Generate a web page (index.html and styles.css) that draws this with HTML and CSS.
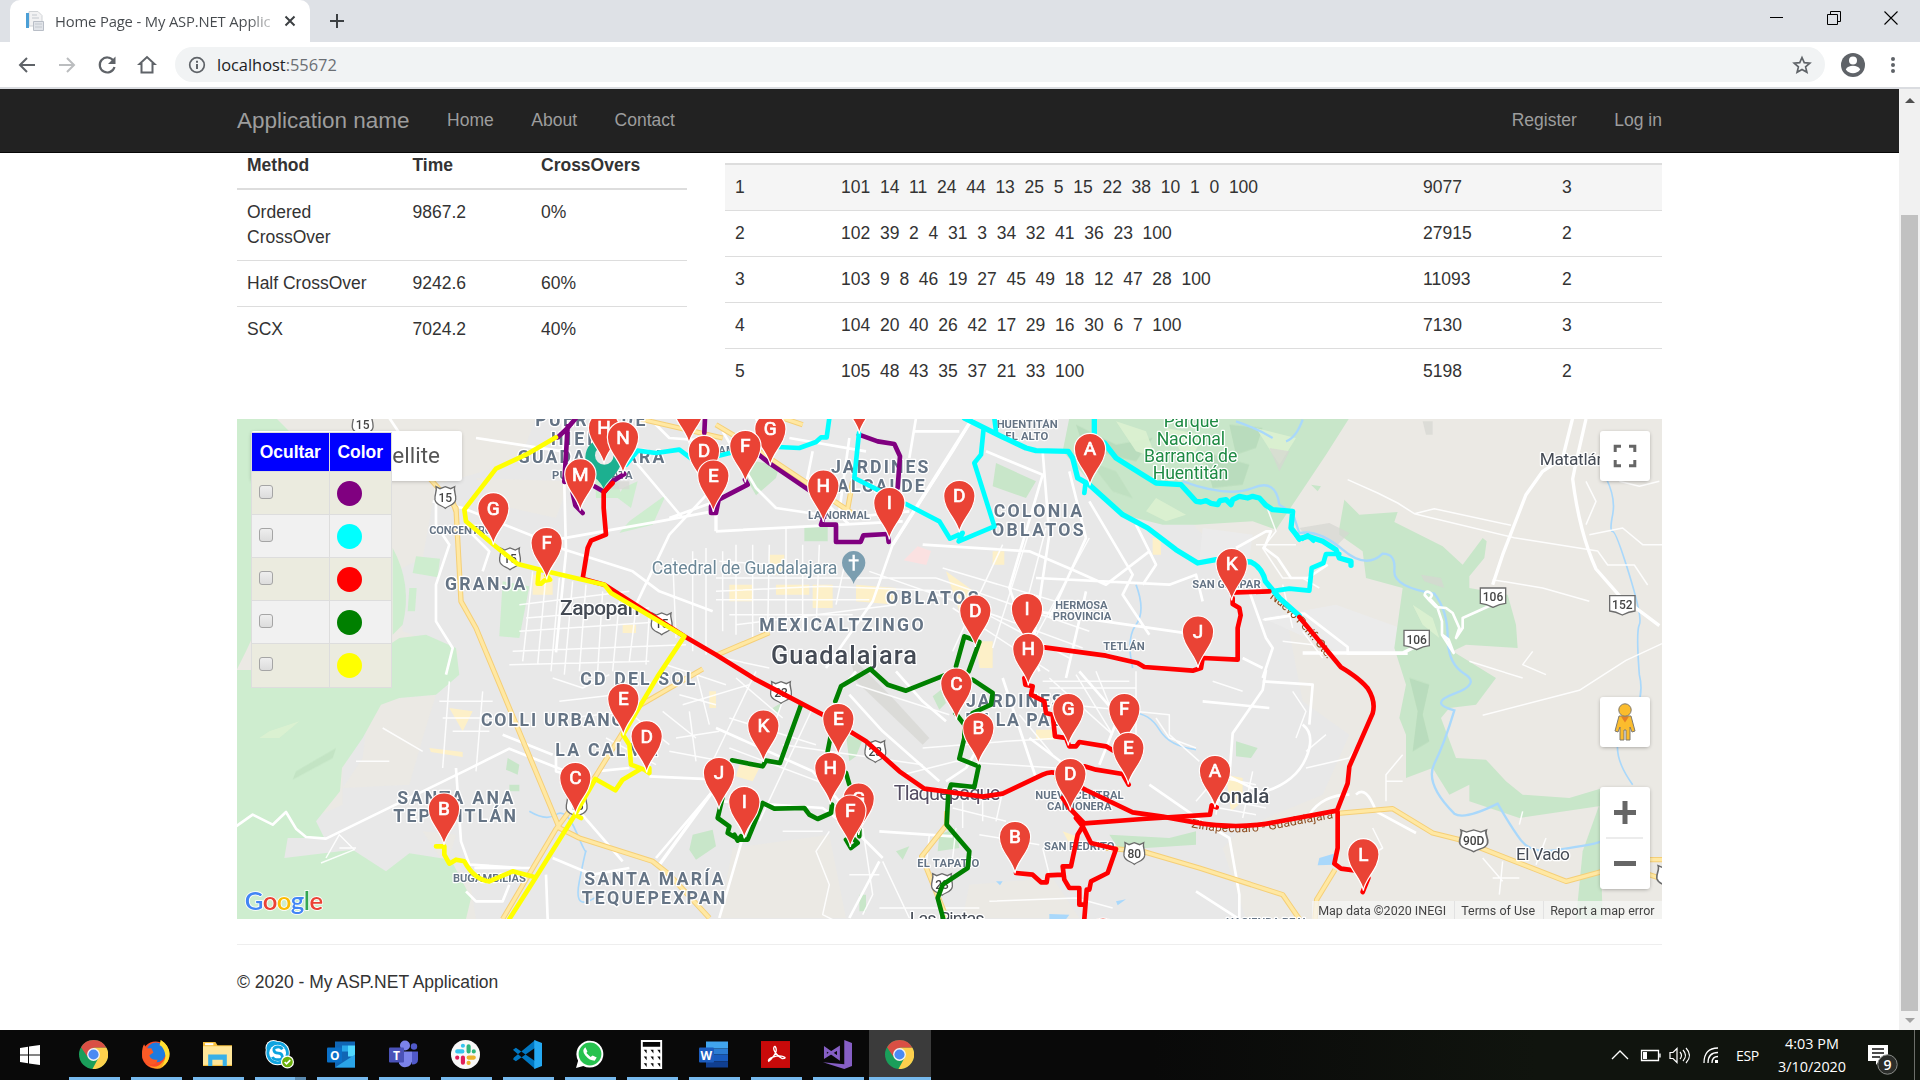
FILE: index.html
```html
<!DOCTYPE html>
<html lang="en">
<head>
<meta charset="utf-8">
<title>Home Page - My ASP.NET Application</title>
<link rel="stylesheet" href="styles.css">
</head>
<body>
<header class="browser">
  <div class="tabstrip">
    <div class="tab">
      <svg class="favicon" width="20" height="20" viewBox="0 0 20 20"><path d="M4 .5h9l4 4V15H4z" fill="#f2f2f3" stroke="#d0d3d6"/><path d="M1 2h3v15H1z" fill="#4b9fd6"/><path d="M8.500 10.500h10v9h-10z" fill="#e1e4e9" stroke="#b9bec7"/><path d="M7 4h5M7 7h7M10 13h7M10 16h7" stroke="#c3c8ce"/></svg>
      <span class="tab-title">Home Page - My ASP.NET Applic</span>
      <svg width="12" height="12" viewBox="0 0 12 12"><path d="M1.500 1.500l9 9m0-9l-9 9" stroke="#3c4043" stroke-width="2"/></svg>
    </div>
    <svg class="newtab" width="16" height="16" viewBox="0 0 16 16"><path d="M8 1v14M1 8h14" stroke="#3c4043" stroke-width="2"/></svg>
    <div class="winbtns">
      <svg width="14" height="14" viewBox="0 0 14 14"><path d="M0 6.500h13" stroke="#000"/></svg>
      <svg width="14" height="14" viewBox="0 0 14 14"><path d="M.5 3.500h10v10H.5zM3.500 3V.5h10v10H11" fill="none" stroke="#000"/></svg>
      <svg width="14" height="14" viewBox="0 0 14 14"><path d="M.5 .5l13 13m0-13l-13 13" stroke="#000" stroke-width="1.100"/></svg>
    </div>
  </div>
  <div class="toolbar">
    <svg class="tool" viewBox="0 0 20 20"><path d="M18 10H3M10 3l-7 7 7 7" fill="none" stroke="#5f6368" stroke-width="2"/></svg>
    <svg class="tool" viewBox="0 0 20 20"><path d="M2 10h15M10 3l7 7-7 7" fill="none" stroke="#bbbdbf" stroke-width="2"/></svg>
    <svg class="tool" viewBox="0 0 20 20"><path d="M16.300 5.500A7.500 7.500 0 1 0 17.500 12" fill="none" stroke="#5f6368" stroke-width="2.200"/><path d="M18.500 1.500V9H11z" fill="#5f6368"/></svg>
    <svg class="tool" viewBox="0 0 20 20"><path d="M4.500 17.500V9H2.500L10 2l7.500 7h-2v8.500z" fill="none" stroke="#5f6368" stroke-width="2"/></svg>
    <div class="omnibox">
      <svg width="18" height="18" viewBox="0 0 18 18"><circle cx="9" cy="9" r="7.300" fill="none" stroke="#5f6368" stroke-width="1.700"/><path d="M9 8v5M9 4.800v1.900" stroke="#5f6368" stroke-width="2"/></svg>
      <span class="url">localhost<span class="port">:55672</span></span>
      <svg class="star" width="20" height="20" viewBox="0 0 24 24"><path d="M12 3l2.700 6.200 6.700.6-5.100 4.400 1.600 6.600L12 17.300l-5.900 3.500 1.600-6.600-5.100-4.400 6.700-.6z" fill="none" stroke="#5f6368" stroke-width="2"/></svg>
    </div>
    <svg width="24" height="24" viewBox="0 0 24 24"><circle cx="12" cy="12" r="12" fill="#5f6368"/><circle cx="12" cy="7.500" r="4" fill="#fff"/><path d="M4.800 16.500c2-5 12.400-5 14.400 0-3.400 5-11 5-14.400 0z" fill="#fff"/></svg>
    <svg class="dots" width="6" height="18" viewBox="0 0 6 18"><g fill="#5f6368"><circle cx="3" cy="3" r="2"/><circle cx="3" cy="9" r="2"/><circle cx="3" cy="15" r="2"/></g></svg>
  </div>
</header>
<div class="viewport">
  <div class="page">
    <nav class="navbar"><div class="container">
      <a class="brand">Application name</a><a>Home</a><a>About</a><a>Contact</a>
      <a class="push">Register</a><a class="last">Log in</a>
    </div></nav>
    <main class="container col">
      <div class="tables">
        <table class="tbl methods">
          <colgroup><col class="m1"><col class="m2"><col></colgroup>
          <thead><tr><th>Method</th><th>Time</th><th>CrossOvers</th></tr></thead>
          <tbody>
            <tr><td>Ordered CrossOver</td><td>9867.2</td><td>0%</td></tr>
            <tr><td>Half CrossOver</td><td>9242.6</td><td>60%</td></tr>
            <tr><td>SCX</td><td>7024.2</td><td>40%</td></tr>
          </tbody>
        </table>
        <table class="tbl routes">
          <colgroup><col class="r1"><col class="r2"><col class="r3"><col></colgroup>
          <tbody>
            <tr class="hover"><td>1</td><td>101  14  11  24  44  13  25  5  15  22  38  10  1  0  100</td><td>9077</td><td>3</td></tr>
            <tr><td>2</td><td>102  39  2  4  31  3  34  32  41  36  23  100</td><td>27915</td><td>2</td></tr>
            <tr><td>3</td><td>103  9  8  46  19  27  45  49  18  12  47  28  100</td><td>11093</td><td>2</td></tr>
            <tr><td>4</td><td>104  20  40  26  42  17  29  16  30  6  7  100</td><td>7130</td><td>3</td></tr>
            <tr><td>5</td><td>105  48  43  35  37  21  33  100</td><td>5198</td><td>2</td></tr>
          </tbody>
        </table>
      </div>
      <div class="map">
        <svg class="canvas" viewBox="3 3 4275 1500">
          <defs>
            <path id="pin" d="M0 109C-5 72-47 43-47 0a47 47 0 1 1 94 0C47 43 5 72 0 109z"/>
            <path id="us" d="M-28-33L-16-27 0-33 16-27 28-33C24-18 33-12 31 6 28 24 10 22 0 32-10 22-28 24-31 6-33-12-24-18-28-33z"/>
            <path id="st" d="M-38-28H38V18Q20 20 0 30-20 20-38 18z"/>
            <path id="perif" d="M3100 540Q3185 600 3290 745"/>
            <path id="zina" d="M2865 1228Q3000 1255 3120 1232T3302 1199"/>
          </defs>
          <rect x="0" y="0" width="4280" height="1510" fill="#e8e8e8"/>
          <!-- open countryside -->
          <g fill="#ebe9e4">
            <path d="M0 0H900L850 130 600 200 560 420 480 460 500 640 670 700 640 760 430 860 320 1050 320 1160 0 1300z"/>
            <path d="M720 180L1000 190 960 300 780 260z"/>
            <path d="M3060 0H4280V1503H3030L2960 1290 3020 1230 3260 1130 3340 950 3200 850 3150 590 2880 330 2800 200z"/>
            <path d="M400 850L600 830 560 960 520 1100 320 1110 380 1020z"/>
            <path d="M560 1240L660 1250 640 1320 700 1380 720 1503H690L620 1330z"/>
            <path d="M1490 1290L1780 1250 1830 1500H1450zM2200 1400L2450 1380 2530 1500H2180z"/>
          </g>
          <g fill="#ebebeb"><path d="M2900 330L3050 350 3040 420 2890 430zM3080 600L3300 560 3520 640 3520 700 3300 700z"/></g>
          <!-- parks -->
          <g fill="#ceedcf">
            <path d="M0 0H120L200 80 160 420 30 700 0 760z"/>
            <path d="M0 756H260L250 640 430 700 490 660 570 650 660 690 670 770 600 830 490 840 435 860 380 960 318 1050 312 1120 240 1210 265 1260 155 1260 145 1320 350 1295 450 1360 520 1306 645 1325 705 1440 690 1503H0z"/>
            <path d="M470 390Q530 500 500 620L470 650zM540 415L612 422 605 478 530 465zM520 510h22l-5 70h-22z"/>
            <path d="M800 490L880 505 850 660 790 655z"/>
            <path d="M1075 120L1120 125 1160 240 1080 240zM1160 210l45-20-20 80-40-30zM1180 310l110-80-40 90-100 25z"/>
          </g>
          <g fill="#c8e6c9">
            <path d="M2500 0H3340L3270 110 3120 335 3050 310 2880 320 2780 320 2660 290 2570 200 2480 100z"/>
            <path d="M3310 330L3325 245 3370 290 3485 282 3475 312 3620 385 3680 440 3740 360 3752 370 3745 420 3700 475 3700 510 3815 530 3840 620 3845 690 3690 680 3650 700 3780 780 3720 860 3640 870 3615 900 3660 1020 3750 1025 3810 1090 3860 1130 4000 1140 4100 1110 4230 1130 4190 1150 3850 1200 3700 1150 3700 1100 3640 1130 3590 1050 3510 1080 3510 950 3490 900 3510 800 3475 690 3500 510 3390 480 3380 400 3310 350z"/>
            <path d="M4040 1300L4090 1160 4100 1503H4020z"/>
            <path d="M1560 130L1630 145 1620 180 1560 232 1530 180zM2280 135L2400 190 2370 240 2270 205zM1705 325h70v45h-70z"/>
            <path d="M1830 950l50 15-20 50-20 15zM2110 1250l50-20 10 60-65 10zM2090 835l25-20 15 40-20 20zM3000 970l65 20-20 30-45-5zM2620 1250l180 10 80-20v40l-230 15zM1370 1250l60-15 10 50-60 40-20-30z"/>
            <path d="M815 1020l35 20-5 30-35-15zM820 1100h30v20h-30zM1980 1300l40-15-20 40zM1870 1430h20v50h-20zM3225 200l30 5-10 15zM1610 870l25-15-10 35z"/>
          </g>
          <g fill="#b5d9b8" opacity=".75">
            <path d="M2520 20L2640 80 2750 60 2700 130 2620 110 2540 80zM2900 100L3040 140 3020 200 2930 210zM2980 20l100 10-20 60-60 20zM3520 780l60 20-20 90 20 80-50 30 15-120z"/>
            <path d="M180 1060L300 990 290 1020 170 1085zM60 790l20-10-5 30zM2560 130l80 30 50 80-60-20z" opacity=".6"/>
          </g>
          <g fill="#dcf1d0" opacity=".9"><path d="M2640 10l90 30 30 80-60-20zM2790 30l110 20-40 90zM2760 240l90 50-60 20-60-30zM3060 30l120 30-50 80zM3530 560l60 40 20 60-50-40zM100 940l90-30-60 50-60 0z"/></g>
          <g fill="#d6d6d2" opacity=".7"><path d="M3190 330l90-15 60 30-40 40-80-20zM3555 470l60 10 10 30-60-20zM3100 90l60 10-30 60zM3560 10h30v40h-20zM1120 190h60v24h-60zM1840 710l130 130 110 120-20 20-200-190z"/></g>
          <g fill="#fdf0c8">
            <path d="M890 470h60v60h-60zM1600 410h45v60h-45zM1480 500h70v50h-70zM1620 500h100v30h-100zM1730 500h60v70h-60zM1860 500l120 10v50l-120-10zM2130 460l70 50 40 30-10 60-60-20zM2270 400h35v40h-35zM2220 670h50v80h-40zM2750 360h25v50h-25zM2400 935h60v30h-60z"/>
            <path d="M1510 1040l60 10-20 40-50-15zM2480 1240l40 15-15 30zM2970 1070l50 10v70l-35 30zM1420 820h20v50h-20zM640 870l70 10-30 60zM580 990l100 12v15l-95-15zM1160 620h40v25h-40z"/>
          </g>
          <path d="M2045 385l40 14-14 42-68-14z" fill="#fbe1e1"/>
          <g class="water"><path d="M3000 10q60 20 110 50M3150 70q30-10 50-65M2840 190q140 50 210 20t80 50l40 25 20 60q60-10 130 50t120 12q40 0 35 50t120 70q40 50 40 130t50 110-30 60 0 50q-30 100-60 160t60 150q30 20 130-30 40 70 70 110t100 30 120-20 90-60"/>
            <path d="M4110 180q30 60 20 110t0 50 50 130 30 150 0 150q20 80-40 150t20 180M2700 500q30 80 0 120t-10 130M2690 885q50 0 80 50t110 60M880 1180q50 30 80 10t60 50 30 60-20 90 60 40" stroke-width="5"/></g>
          <path d="M3250 1320l50-15-5 35-50 2zM2280 1390h20l-8 12zM2440 1488l60 2-10 14h-50zM2640 1450l30-6-25 18z" fill="#a9d8fb"/>
          <!-- local streets -->
          <g class="street thin">
            <path d="M1440 480H2100M1440 520L1760 505 2150 520M1440 545L1900 545M1480 590H1850M1500 620L1980 560M1450 430L1620 440M1460 400V640M1500 380V650M1550 380V660M1600 380L1595 640M1650 330V600M1700 380V640M1750 380L1740 640M1830 420L1800 560M1900 460L2300 600M2120 450L2560 580M2100 480L2560 640M2080 520L2540 690M2160 540L2500 720M2150 570L2440 760M2300 380L2150 700M2380 340L2270 690M2430 330L2370 560M2560 360L2380 690"/>
            <path d="M1860 800l280 90M1640 980l420 60M1480 900l260 80M1480 990l320 120M1500 780l140 120M1560 760l-140 290M1650 820l-60 170M1730 870l-160 340M2060 990l250-20 170-10M2000 1070l160-40 300 20M2150 1170l160 40M2180 1150v80M2240 1140v70M2300 1120l-20 90M2350 890l100 120M2440 780l190 170M2520 770l110 180M2580 760l80 200M2420 790h260M2440 810h260M2700 760v200M2760 900l40 60 80 30M2500 860l300 30v60l90 80"/>
            <path d="M850 560L1180 520M870 600L1240 570M850 640L1300 610M830 700L1350 680M820 740L1240 730M890 460L860 730M930 470L905 740M970 480L945 760M1010 490L985 770M1050 500L1030 760M1100 520L1085 760M1150 550L1130 760M1200 570L1180 730M1240 590L1230 740M1310 420l10 240M1370 400v300M1410 390v320"/>
            <path d="M640 790L620 1050M610 850h160M620 900h140M650 940h110M740 820l-20 240M1340 860l200-60M1320 960l130-20M1300 1000l160 30M1360 880l20 150M1280 880l100 80M1380 760l40 160M1200 900l100 80M1110 960l150 80M950 780l90 30 80-40M970 850l170-20M1000 900l180-20M1330 830l110 30M1600 750l-140-30M1290 740l180 60"/>
            <path d="M1780 1240l-40 60 40 100-20 90 60 30M1880 1230l30 200-30 60M1840 1370h90M1640 1240h120M1940 1330l80 170M1930 1470h300M2080 1250l-10 100M2160 1230l-10 90M2420 1290l20 80M2230 1250l180 30M2260 1450l260-10 110 30M270 1320l40-70 45 45-100 40M310 1290h50M440 930l120 70M360 1030h100"/>
            <path d="M3090 260l30 80-40 50 60 90h60l50 30M3060 380l120 0M3140 500l30 130M3080 605l120-20M3200 640l60 80M3140 670l90 10M2930 790l90 30M3170 820l40 60-30 80M3210 1000l60-50M3210 1050l130-30 20-30M3500 1010l-50 60v80M3450 1090h50M3410 1230l30 60-80 50M3740 1320l60 70M3800 1330l-10 100M3770 1380h80M3930 1260l-30 80M2940 1080l-60 70M2910 1070l150 30M2940 1140l150 30M2950 1170l110 20M2960 1060l-20 130M3050 1060l-30 140"/>
            <path d="M3335 185l90 40 60 30 50 32 300 72 250 40 30 42h80l40 60M3535 287l60-15 230 50M4060 350l100-20 60 50h60M3770 485l150 25 140 40M3890 700l-30 40 70 30M3740 892l290-75 140-90 108-50M3700 730l160 50M3860 1180l-10 40M4050 190l30 60-30 70M4150 190l60 15 60-15"/>
          </g>
          <g class="street">
            <path d="M0 1225l50-35 60 30 40-38 30 50 30 25 60 5 430-210 120-60 200 80M460 0l40 60 90 30M590 250l90 20 250 100 340-60 160-30M600 210v110l40 60-40 120v110l50 80-20 80M720 60l260 40M980 3l10 400-30 300M1180 110l160 190M1300 300l140-50M1440 200l-140 150-100 210M940 380l250 80 80 60 160 60M700 340l60 60-20 60"/>
            <path d="M1240 0l60 60 140 10M1460 40l100 170 60 60 200 30 200-20M1560 0l60 150 70 30M1730 100l-20 100 130 120M1660 60l230 40M1440 340l560-30M1840 60l-30 220M2210 0l-60 100-180 280-60 170-140 200M2040 0l-20 120M2030 40h140M2250 100l170 70-100 340 90 250M2060 380l320 20 140 60 90 40 130-100M2420 100l20 250-60 400M2500 160l50 200-110 240M2560 250l130 220-30 60 80 120M2700 320l60 120-40 60M2400 480l400 20 80-30 20 80M2400 580l480 70M2550 520l-60 260"/>
            <path d="M1860 760l-50 60M1980 760l80 90 70 60M1840 830l100 110 170 150M1440 930l290 130 80 90M1460 1150l300 20 120 90 60 60M1520 1260l-70 240M1930 1240l220 15M1930 1330l-90 170M2250 950l-60 100-60 40M2300 780l100 300M2380 960l120 90M2530 760l130 150 20 160M2650 890l-60 150M2740 1100l130 90M2900 850l200 20M3090 756l-10 60-90 130-10 130 120 60M3020 720l60 30"/>
            <path d="M3000 390l90-50h15l-20 50 40 30 40 60 50 0 60-40M3040 520l50 140 20 30-30 90M3085 605l120-18 130 100 0 20 180 0M2880 1200l100 60 30 170v73M2880 1420l140 90M3220 1190q40-60 120-60M3360 1130q30-30 60 50l120 65M3080 790l150 10-10 120M3200 920q40 30 10 100t-120 100"/>
            <path d="M660 1050l15 220 25 70 160 10M715 1350h180M690 1420l30 30h80l20-50M930 1370l5 133M950 1320l120 50 110-20M1030 1180l130 150M1260 1320l170-200M1080 1060l100-10M1240 1075l210 10M960 1010v50l120 30M800 950l150 60"/>
          </g>
          <g class="street wide"><path d="M3770 500l30-90 70-180 50-70 60-40 30-120M4050 3l-30 130-10 50q20 160 70 270l70 80 120 90M3200 705l300 0 60-30M1430 1120l-160 220M2210 0l-240 380M1440 240v100"/></g>
          <path class="street" d="M3765 562l-85 38 0 30-20 30 10-30-20-45-20-15-30-3-18-18-16-18q2-15 15-8t0 18l22 24 15 45 0 40 35 55-15-40-20-15"/>
          <!-- highways -->
          <path class="hw-edge" d="M580 180l80 90 15 280 45 80 250 600 60 30 220 70 50 40 120 130M800 1503l160-270 120-160 130-210 190-110M1440 712l160-68M1200 0l260 60M1440 20l100 60 330 220M3305 1186l165-14 120 73 80 20 320 125 110-30 70-35h108M4150 1340l120 40M2610 1290l110 10 170 50 250 80 50 73M3297 1355l-55 90-5 60M2132 1180v40l-75 95 75 185M2460 1075l60 100M1830 300l20-110M1640 0l60 20M660 280l-20-60"/>
          <path class="hw" d="M580 180l80 90 15 280 45 80 250 600 60 30 220 70 50 40 120 130M800 1503l160-270 120-160 130-210 190-110M1440 712l160-68M1200 0l260 60M1440 20l100 60 330 220M3305 1186l165-14 120 73 80 20 320 125 110-30 70-35h108M4150 1340l120 40M2610 1290l110 10 170 50 250 80 50 73M3297 1355l-55 90-5 60M2132 1180v40l-75 95 75 185M2460 1075l60 100M1830 300l20-110M1640 0l60 20M660 280l-20-60"/>
          <g class="shield">
            <g transform="translate(380 22)"><use href="#us"/><text>15</text></g><g transform="translate(628 239)"><use href="#us"/><text>15</text></g><g transform="translate(822 423)"><use href="#us"/><text>15</text></g><g transform="translate(1277 618)"><use href="#us"/><text>15</text></g><g transform="translate(1022 1165)"><use href="#us"/><text>15</text></g>
            <g transform="translate(1635 824)"><use href="#us"/><text>23</text></g><g transform="translate(1918 1001)"><use href="#us"/><text>23</text></g><g transform="translate(2118 1400)"><use href="#us"/><text>23</text></g><g transform="translate(2695 1307)"><use href="#us"/><text>80</text></g>
            <g transform="translate(3713 1269)"><use href="#us" transform="scale(1.350 1)"/><text>90D</text></g><g transform="translate(4300 1376)"><use href="#us" transform="scale(1.200 1)"/></g>
            <g transform="translate(3771 538)"><use href="#st"/><text>106</text></g><g transform="translate(3542 665)"><use href="#st"/><text>106</text></g><g transform="translate(4159 561)"><use href="#st"/><text>152</text></g>
          </g>
          <!-- place names -->
          <g class="lbl big">
            <text x="898" y="25" textLength="330">PUERTA DE</text><text x="945" y="80" textLength="230">HIERRO</text><text x="845" y="136" textLength="440">GUADALAJARA</text>
            <text x="627" y="515" textLength="241">GRANJA</text><text x="1033" y="802" textLength="345">CD DEL SOL</text><text x="735" y="924" textLength="428">COLLI URBANO</text><text x="958" y="1014" textLength="306">LA CALMA</text>
            <text x="484" y="1157" textLength="348">SANTA ANA</text><text x="472" y="1213" textLength="368">TEPETITLÁN</text><text x="1045" y="1401" textLength="418">SANTA MARÍA</text><text x="1037" y="1457" textLength="431">TEQUEPEXPAN</text>
            <text x="1785" y="166" textLength="292">JARDINES</text><text x="1803" y="222" textLength="263">ALCALDE</text><text x="2273" y="296" textLength="265">COLONIA</text><text x="2268" y="353" textLength="275">OBLATOS</text><text x="1950" y="557" textLength="278">OBLATOS</text><text x="1570" y="639" textLength="493">MEXICALTZINGO</text>
            <text x="2190" y="867" textLength="290">JARDINES</text><text x="2188" y="923" textLength="290">DE LA PAZ</text>
          </g>
          <g class="lbl small">
            <text x="948" y="183" textLength="242">PUERTA PLATA</text><text x="580" y="348" textLength="190">CONCENTRO</text><text x="651" y="1392" textLength="219">BUGAMBILIAS</text><text x="1716" y="304" textLength="186">LA NORMAL</text><text x="2282" y="31" textLength="183">HUENTITÁN</text><text x="2308" y="66" textLength="129">EL ALTO</text>
            <text x="2458" y="572" textLength="157">HERMOSA</text><text x="2450" y="606" textLength="176">PROVINCIA</text><text x="2602" y="696" textLength="124">TETLÁN</text><text x="2398" y="1144" textLength="265">NUEVA CENTRAL</text><text x="2433" y="1177" textLength="194">CAMIONERA</text><text x="2424" y="1297" textLength="212">SAN PEDRITO</text><text x="2044" y="1347" textLength="186">EL TAPATÍO</text><text x="2869" y="509" textLength="205">SAN GASPAR</text><text x="2970" y="1525" textLength="248">HACIENDA REAL</text><text x="1447" y="108">AM</text>
          </g>
          <g class="lbl city">
            <text x="972" y="591" textLength="238" font-size="63">Zapopan</text><text x="1605" y="739" textLength="438" font-size="76">Guadalajara</text><text x="2916" y="1154" textLength="184" font-size="62">Tonalá</text>
            <g font-weight="400"><text x="1973" y="1147" textLength="320" font-size="60" fill="#544d63">Tlaquepaque</text><text x="2021" y="1521" textLength="225" font-size="54">Las Pintas</text><text x="3911" y="142" textLength="199" font-size="52">Matatlán</text><text x="3840" y="1325" textLength="162" font-size="52">El Vado</text></g>
          </g>
          <g class="lbl poi"><text x="1247" y="469" textLength="557">Catedral de Guadalajara</text>
            <g fill="#1e8a43"><text x="2783" y="27" textLength="165">Parque</text><text x="2762" y="80" textLength="205">Nacional</text><text x="2724" y="132" textLength="280">Barranca de</text><text x="2750" y="184" textLength="227">Huentitán</text></g></g>
          <g class="roadname"><text><textPath href="#perif" textLength="255">Nuevo Perif. Ote.</textPath></text><text><textPath href="#zina" textLength="432">Zinapecuaro - Guadalajara</textPath></text></g>
          <path d="M1853 498c-3-20-35-36-35-64a35 35 0 1 1 70 0c0 28-32 44-35 64z" fill="#7b9eb0"/><path d="M1853 410v48M1838 427h30" stroke="#fff" stroke-width="7"/>
          <!-- routes -->
          <g class="route">
            <path stroke="purple" d="M1020 0L995 30 965 58M995 25L985 192M1075 205L1105 222 1130 190 1165 168M1010 225L1018 262 1040 285M1405 45L1407 0M1527 185L1535 200 1448 245 1440 285 1425 285V265M1568 110L1602 137 1720 217M1765 290L1755 320H1800V372H1874L1882 352 1955 348 1958 372M1869 50L1925 70 1975 78 1992 115 1985 210"/>
            <path stroke="cyan" d="M1170 140L1205 98 1260 105 1330 95 1370 125M1445 114L1485 104M1625 87L1690 90 1740 72 1755 58H1772L1780 0M1869 45L1855 180 1930 218M2010 258L2110 310 2142 362 2180 345 2168 370 2275 325 2215 135 2235 110 2243 30M2280 40L2275 0M2545 225L2548 200"/>
            <path stroke="cyan" stroke-width="16" d="M2185 0L2310 62 2370 90 2400 98 2497 100 2510 120 2525 180 2560 200 2660 290 2735 330 2820 395 2885 435 2940 425 3045 432Q3080 450 3088 490L3130 540 3190 593M2575 0V45M2605 75L2640 120 2720 170 2760 195 2835 200 2880 250 2895 252 2910 248 2925 256 2945 260 2952 248 2970 245 2985 260 2990 245 3010 235 3035 240 3050 235 3070 240 3090 262 3110 275 3170 280 3165 330 3190 362 3215 355 3260 370 3300 395 3310 420 3345 430V442"/>
            <path stroke="cyan" d="M3120 518L3160 512 3220 518 3227 450 3262 435 3270 408 3310 408M3200 362L3215 352 3232 368M3180 350L3190 365"/>
            <path stroke="green" d="M1696 858L1632 1035 1590 1028 1580 1045 1488 1027M1460 1136L1445 1200 1480 1225 1475 1245 1510 1265 1535 1265 1580 1155 1615 1172 1705 1170 1720 1190 1745 1203 1785 1185 1788 1160M1775 1000L1785 950M1798 850L1815 805 1903 753 1955 800 2010 818 2125 772M2160 745L2185 655 2230 672 2198 760M2210 785L2270 825 2265 860 2210 885M2158 885L2185 920 2185 960 2170 1022 2228 1045 2215 1107 2145 1100 2137 1125 2132 1220 2200 1300 2195 1350 2120 1400 2105 1440 2122 1503M1830 1065L1840 1100M1830 1265L1845 1290 1865 1275 1850 1260M1870 1235V1255M1495 1250L1505 1268 1515 1255"/>
            <path stroke="red" d="M1130 195L1103 222 1103 270 1110 350 1065 368 1055 390 1040 482 1105 500 1345 655 1440 710 1560 785 1760 890 1890 970 1990 1060 2065 1112 2240 1136 2300 1127 2420 1070Q2460 1050 2500 1090L2550 1116 2690 1183 2780 1196 2880 1214Q3010 1235 3120 1212L3303 1178 3335 1096 3340 1046 3410 886Q3420 850 3395 811 3370 780 3315 748L3190 597M3305 1181V1290L3295 1337 3315 1352 3355 1357M3397 1380L3380 1422M2985 524L3100 520M2990 540V558L3010 570 3014 592 3005 630V725L2900 720 2895 750 2870 758 2725 747 2705 735 2610 713 2425 688"/>
            <path stroke="red" d="M2942 1168L2927 1162 2922 1190 2720 1203 2545 1216 2500 1170 2480 1140M2365 780L2368 800 2390 805 2385 830 2425 850 2430 885 2450 890 2457 955 2490 960 2500 985H2520L2530 972 2610 985 2635 1000M2545 1045L2580 1055 2660 1068 2678 1100M2520 1200L2540 1225 2565 1275 2640 1293 2615 1365 2565 1390 2560 1415H2552L2545 1503M2540 1225L2525 1250 2505 1345H2480L2485 1385 2500 1410H2530V1460H2548M2340 1365L2390 1370 2415 1393H2432L2435 1372 2480 1370"/>
            <path stroke="#ff0" d="M960 58L870 110 780 152 685 275 690 310 770 378 845 438 940 462 1105 500 1125 525 1345 655 1265 775 1161 950 1180 980 1185 1040 1225 1055 1240 1065V1050M1215 1052L1160 1085 1138 1117 1078 1083 1017 1190 895 1385 820 1503M898 1378L830 1360 760 1390Q715 1385 685 1330L660 1325 640 1337 625 1310V1285H600M931 472L942 485 925 488 915 497H905L908 462M1017 1190L1035 1200"/>
          </g>
          <path d="M1103 212c-10-28-55-48-55-95a55 55 0 0 1 110 0c0 47-45 67-55 95z" fill="#1cb090"/><circle cx="1105" cy="112" r="28" fill="#e8e8e8"/>
          <!-- stops -->
          <g class="pins">
            <g transform="translate(1358 -33)"><use href="#pin"/><text>C</text></g><g transform="translate(1869 -63)"><use href="#pin"/></g>
            <g transform="translate(1103 28)"><use href="#pin"/><text>H</text></g><g transform="translate(1160 57)"><use href="#pin"/><text>N</text></g><g transform="translate(1602 32)"><use href="#pin"/><text>G</text></g><g transform="translate(1527 83)"><use href="#pin"/><text>F</text></g><g transform="translate(2561 92)"><use href="#pin"/><text>A</text></g><g transform="translate(1403 98)"><use href="#pin"/><text>D</text></g><g transform="translate(1032 168)"><use href="#pin"/><text>M</text></g><g transform="translate(1431 172)"><use href="#pin"/><text>E</text></g>
            <g transform="translate(1761 202)"><use href="#pin"/><text>H</text></g><g transform="translate(2169 233)"><use href="#pin"/><text>D</text></g><g transform="translate(1959 254)"><use href="#pin"/><text>I</text></g><g transform="translate(771 270)"><use href="#pin"/><text>G</text></g><g transform="translate(931 374)"><use href="#pin"/><text>F</text></g><g transform="translate(2986 437)"><use href="#pin"/><text>K</text></g><g transform="translate(2372 572)"><use href="#pin"/><text>I</text></g><g transform="translate(2217 577)"><use href="#pin"/><text>D</text></g><g transform="translate(2885 640)"><use href="#pin"/><text>J</text></g><g transform="translate(2376 692)"><use href="#pin"/><text>H</text></g>
            <g transform="translate(2160 796)"><use href="#pin"/><text>C</text></g><g transform="translate(1161 842)"><use href="#pin"/><text>E</text></g><g transform="translate(2496 872)"><use href="#pin"/><text>G</text></g><g transform="translate(2664 872)"><use href="#pin"/><text>F</text></g><g transform="translate(1806 902)"><use href="#pin"/><text>E</text></g><g transform="translate(1581 922)"><use href="#pin"/><text>K</text></g><g transform="translate(2226 929)"><use href="#pin"/><text>B</text></g><g transform="translate(1231 954)"><use href="#pin"/><text>D</text></g><g transform="translate(2676 989)"><use href="#pin"/><text>E</text></g><g transform="translate(1782 1049)"><use href="#pin"/><text>H</text></g>
            <g transform="translate(2936 1058)"><use href="#pin"/><text>A</text></g><g transform="translate(1448 1064)"><use href="#pin"/><text>J</text></g><g transform="translate(2502 1067)"><use href="#pin"/><text>D</text></g><g transform="translate(1017 1079)"><use href="#pin"/><text>C</text></g><g transform="translate(1867 1141)"><use href="#pin"/><text>G</text></g><g transform="translate(1524 1151)"><use href="#pin"/><text>I</text></g><g transform="translate(623 1171)"><use href="#pin"/><text>B</text></g><g transform="translate(1842 1177)"><use href="#pin"/><text>F</text></g><g transform="translate(2336 1256)"><use href="#pin"/><text>B</text></g><g transform="translate(3381 1308)"><use href="#pin"/><text>L</text></g><g transform="translate(2600 1546)"><use href="#pin"/></g>
          </g>
          <text class="glogo" x="26" y="1475" textLength="235"><tspan fill="#4285f4">G</tspan><tspan fill="#ea4335">o</tspan><tspan fill="#fbbc05">o</tspan><tspan fill="#4285f4">g</tspan><tspan fill="#34a853">l</tspan><tspan fill="#ea4335">e</tspan></text>
        </svg>
        <div class="maptype">Satellite</div>
        <table class="legend">
          <thead><tr><th>Ocultar</th><th>Color</th></tr></thead>
          <tbody>
            <tr><td><input type="checkbox"></td><td><i class="dot purple"></i></td></tr>
            <tr><td><input type="checkbox"></td><td><i class="dot cyan"></i></td></tr>
            <tr><td><input type="checkbox"></td><td><i class="dot red"></i></td></tr>
            <tr><td><input type="checkbox"></td><td><i class="dot green"></i></td></tr>
            <tr><td><input type="checkbox"></td><td><i class="dot yellow"></i></td></tr>
          </tbody>
        </table>
        <div class="ctl full"><svg width="24" height="24" viewBox="0 0 24 24"><path d="M2.200 8V2.200H8M16 2.200h5.800V8M21.800 16v5.800H16M8 21.800H2.200V16" fill="none" stroke="#666" stroke-width="3"/></svg></div>
        <div class="ctl peg"><svg width="22" height="38" viewBox="0 0 22 38"><path d="M5 13h12l4 15-3 1-2-5v13h-4V27h-2v10H6V24l-2 5-3-1z" fill="#fbbc2d" stroke="#7f7a70"/><path d="M7 13.500h8l-4 6z" fill="#e57f25"/><circle cx="11" cy="7" r="6.200" fill="#fbbc2d" stroke="#7f7a70"/></svg></div>
        <div class="ctl zoom"><svg width="50" height="102" viewBox="0 0 50 102"><path d="M14 25.500h22M25 14v23M14 76.500h22" stroke="#666" stroke-width="5"/><path d="M6 51h37" stroke="#e6e6e6" stroke-width="1.500"/></svg></div>
        <div class="attrib"><span>Map data ©2020 INEGI</span><span>Terms of Use</span><span>Report a map error</span></div>
      </div>
      <hr>
      <footer>© 2020 - My ASP.NET Application</footer>
    </main>
  </div>
  <div class="scrollbar"><span class="up"></span><span class="thumb"></span><span class="down"></span></div>
</div>
<div class="taskbar">
  <div class="start"><svg width="20" height="20" viewBox="0 0 20 20"><path d="M0 3l8-1.200v7.700H0zM9 1.600L20 0v9.500H9zM0 10.500h8v7.700L0 17zM9 10.500h11V20L9 18.400z" fill="#fff"/></svg></div>
  <div class="app"><svg viewBox="0 0 28 28"><circle cx="14" cy="14" r="14" fill="#1a9e5a"/><path d="M2 7a14 14 0 0 1 24.500.5H14L8 16z" fill="#d94f44"/><path d="M26.500 7.500A14 14 0 0 1 13 28l6-11-5-9.500z" fill="#fdd04d"/><circle cx="14" cy="14" r="6.200" fill="#f4f4f4"/><circle cx="14" cy="14" r="4.900" fill="#4a8af4"/></svg></div>
  <div class="app"><svg viewBox="0 0 28 28"><circle cx="14" cy="14.500" r="13" fill="#fb4b28"/><circle cx="14.500" cy="12" r="9.500" fill="#1d7be0"/><path d="M3 4l2 4h5l2 4-4 3q2 5 8 4-1 5-7 5Q1 22 1 13 1 7 3 4z" fill="#fb5a26"/><path d="M4 22q10 8 17-1t0-14L19 0q8 5 8.500 13T21 26 4 22z" fill="#ffa51f"/><path d="M19 0q8 5 8.500 13T20 26q5-8 3-14t-5-7z" fill="#ffe033"/></svg></div>
  <div class="app"><svg viewBox="0 0 28 28"><path d="M0 2h12l2 3h14v20H0z" fill="#f4be3c"/><path d="M0 6h28v18H0z" fill="#ffe699"/><path d="M5 25V14h18v11h-4v-6H9v6z" fill="#38b0e8"/><path d="M2 3h8v2H2z" fill="#fff"/></svg></div>
  <div class="app split"><svg viewBox="0 0 31 30"><circle cx="9" cy="8" r="8.500" fill="#fff"/><circle cx="13.500" cy="13.500" r="13" fill="#fff"/><circle cx="9" cy="8" r="7.500" fill="#10a4e0"/><circle cx="13.500" cy="13.500" r="12" fill="#10a4e0"/><circle cx="13.500" cy="13.500" r="9" fill="#fff"/><path d="M18.500 9.500Q17 6.500 13 7T9.500 10.500t4.500 3 4.500 3.500-4.500 3.500-6-3" fill="none" stroke="#0da3df" stroke-width="3"/><circle cx="24" cy="23" r="7" fill="#fff"/><circle cx="24" cy="23" r="5.700" fill="#6bb00b"/><path d="M21 23l2 2 4-4" fill="none" stroke="#fff" stroke-width="1.800"/></svg></div>
  <div class="app"><svg viewBox="0 0 29 28"><path d="M8 1h20v26H8z" fill="#1066b5"/><path d="M15 5h6v6h-6z" fill="#28a8ea"/><path d="M21 5h7v11h-7z" fill="#50d9ff"/><path d="M8 27l20-13v13z" fill="#2aa4e8"/><rect y="7" width="15" height="15" rx="1" fill="#0a70c8"/><text x="3" y="19" class="ico">O</text></svg></div>
  <div class="app"><svg viewBox="0 0 29 28"><circle cx="16" cy="5" r="5" fill="#7b83eb"/><circle cx="25" cy="6" r="3.200" fill="#5059c9"/><path d="M10 11h13v10a7 7 0 0 1-13 2z" fill="#7b83eb"/><path d="M23 11h6v8q0 5-6 5z" fill="#5059c9"/><rect y="7" width="15" height="15" rx="1" fill="#4a52b8"/><text x="4" y="19" class="ico">T</text></svg></div>
  <div class="app"><svg viewBox="0 0 28 28"><circle cx="14" cy="14" r="14" fill="#f8f8f8"/><g stroke-width="4" stroke-linecap="round"><path d="M6 11h5M11.500 5.500v.1" stroke="#36c5f0"/><path d="M17 6v5M22 11v.1" stroke="#2eb67d"/><path d="M17 17h5M17 22v.1" stroke="#ecb22e"/><path d="M11.500 17v5M6 17v.1" stroke="#e01e5a"/></g></svg></div>
  <div class="app"><svg viewBox="0 0 30 30"><path d="M0 10l3-2 20 14v8L1 11zM0 20l3 2L23 8V0L1 18z" fill="#0077c2"/><path d="M22 0l8 3v24l-8 3z" fill="#25a9f2"/></svg></div>
  <div class="app"><svg viewBox="0 0 28 28"><path d="M1 27l2-7a13 13 0 1 1 5 5z" fill="#fff"/><circle cx="14.500" cy="13.500" r="11" fill="#27c24f"/><path d="M10 7q-4 3 0 8t9 5l2-3-4-2-2 1.500-4-4L12 11z" fill="#fff"/></svg></div>
  <div class="app"><svg viewBox="0 0 28 30"><path d="M3 0h22v30H3z" fill="#fff"/><path d="M5 2h18v5H5zM6 10h3v4zM13 10h3v4zM20 10h3v4zM6 17h3v4zM13 17h3v4zM20 17h3v4zM6 24h3v4zM13 24h3v4zM20 24h3v4z" fill="#080808"/></svg></div>
  <div class="app"><svg viewBox="0 0 29 28"><path d="M7 1h22v7H7z" fill="#41a5ee"/><path d="M7 8h22v6H7z" fill="#2b7cd3"/><path d="M7 14h22v7H7z" fill="#185abd"/><path d="M7 21h22v6H7z" fill="#103f91"/><rect y="7" width="15" height="15" rx="1" fill="#1c5dbf"/><text x="1.500" y="19" class="ico">W</text></svg></div>
  <div class="app"><svg viewBox="0 0 28 28"><path d="M0 1h28v26H0z" fill="#c80a0a"/><path d="M7.500 20.500q-1.500-2 4-4 6-2 10-.5t-1 2q-3-1-6-5t-2-6 2 1-2 7-5 5.500z" fill="none" stroke="#fff" stroke-width="1.300"/></svg></div>
  <div class="app"><svg viewBox="0 0 30 30"><path d="M22 0l8 3v24l-8 3L0 23l22 2z" fill="#865fc5"/><path d="M2.500 9v8L16 8.500v10z" fill="none" stroke="#865fc5" stroke-width="3"/></svg></div>
  <div class="app active"><svg viewBox="0 0 28 28"><circle cx="14" cy="14" r="14" fill="#1a9e5a"/><path d="M2 7a14 14 0 0 1 24.500.5H14L8 16z" fill="#d94f44"/><path d="M26.500 7.500A14 14 0 0 1 13 28l6-11-5-9.500z" fill="#fdd04d"/><circle cx="14" cy="14" r="6.200" fill="#f4f4f4"/><circle cx="14" cy="14" r="4.900" fill="#4a8af4"/></svg></div>
  <div class="tray">
    <svg width="110" height="24" viewBox="0 0 110 24"><g fill="none" stroke="#fff" stroke-width="1.300"><path d="M3 16l8-8 8 8M32.500 7.500h17v10h-17zM51 10.500v4"/><path d="M61 9.500h3l4-4v14l-4-4h-3zM71 9q3 3.500 0 7M74 7q5 5.500 0 11M77 5q7 7.500 0 15" stroke-width="1.200"/><path d="M95 20q0-15 14-15M99 20q0-10.500 10-10.500M103 20q0-6.500 6-6.500"/></g><path d="M34 9h4v7h-4zM106 17h3v3h-3z" fill="#fff"/></svg>
    <span class="lang">ESP</span>
    <div class="clock"><span>4:03 PM</span><span>3/10/2020</span></div>
    <svg class="notif" width="31" height="32" viewBox="0 0 31 32"><path d="M0 1h20v16H11l-3 4v-4H0z" fill="#fff"/><path d="M4 5h12M4 9h12M4 13h8" stroke="#111" stroke-width="1.300"/><circle cx="19.500" cy="20.500" r="9.700" fill="#2b2d2a" stroke="#8b8d8a"/><text x="15.500" y="25.500" class="ico n9">9</text></svg>
    <span class="peek"></span>
  </div>
</div>
</body>
</html>
```
FILE: styles.css
```css
* { box-sizing: border-box; }
body { margin: 0; width: 1920px; height: 1080px; overflow: hidden; display: flex; flex-direction: column; background: #fff; font: 17.5px/25px "Liberation Sans", Arial, sans-serif; color: #333; }
svg { display: block; flex: none; }

/* browser chrome */
.browser { height: 89px; border-bottom: 2px solid #dadce0; flex: none; font-family: "Open Sans", "Noto Sans", sans-serif; }
.tabstrip { height: 42px; background: #dee1e6; display: flex; align-items: center; }
.tab { margin-left: 10px; width: 300px; height: 42px; background: #fff; border-radius: 10px 10px 0 0; display: flex; align-items: center; padding: 0 14px 0 15px; }
.tab-title { margin-left: 10px; width: 219px; margin-right: 10px; font-size: 14.8px; letter-spacing: -.15px; white-space: nowrap; overflow: hidden; background: linear-gradient(90deg, #45494d 88%, #ddd); -webkit-background-clip: text; background-clip: text; color: transparent; }
.newtab { margin-left: 19px; }
.winbtns { margin-left: auto; display: flex; gap: 43px; padding: 0 22px 6px 0; }
.toolbar { height: 45px; display: flex; align-items: center; padding-left: 17px; }
.tool { width: 20px; height: 20px; margin-right: 20px; }
.omnibox { margin-left: -2px; width: 1650px; height: 35px; border-radius: 18px; background: #f1f3f4; display: flex; align-items: center; padding: 0 13px; margin-right: 15.5px; }
.url { margin-left: 11px; font-size: 16.4px; color: #202124; }
.port { color: #6b6f74; }
.star { margin-left: auto; }
.dots { margin-left: 25px; }

/* page */
.viewport { flex: 1; display: flex; min-height: 0; }
.page { width: 1899px; overflow: hidden; }
.container { width: 1425px; margin: 0 auto; display: flex; }
.col { flex-direction: column; }
.navbar { height: 64px; background: #222; border-bottom: 1px solid #080808; color: #9d9d9d; }
.navbar .container { height: 62px; align-items: center; }
.navbar a { margin-right: 37.5px; }
.navbar .brand { font-size: 22.5px; }
.navbar .push { margin-left: auto; }
.navbar .last { margin-right: 0; }
.tables { display: flex; justify-content: space-between; height: 266px; align-items: flex-start; }
.tbl { border-collapse: separate; border-spacing: 0; table-layout: fixed; }
.tbl td { padding: 10px; border-top: 1px solid #ddd; vertical-align: top; white-space: pre; }
.methods { width: 450px; }
.methods td { white-space: normal; }
.methods th { text-align: left; padding: 0 10px 10px; }
.methods tr:first-child td, .routes tr:first-child td { border-top: 2px solid #ddd; }
.methods .m1 { width: 165.5px; }
.methods .m2 { width: 128.5px; }
.routes { width: 937px; margin-top: 10px; }
.routes .r1 { width: 106px; }
.routes .r2 { width: 582px; }
.routes .r3 { width: 139px; }
.hover { background: #f5f5f5; }
hr { width: 100%; margin: 25px 0; border: 0; border-top: 1px solid #eee; }

/* map */
.map { position: relative; height: 500px; overflow: hidden; font-family: Roboto, sans-serif; }
.canvas { width: 1425px; height: 500px; }
.street { fill: none; stroke: #fff; stroke-width: 8; stroke-linejoin: round; }
.street.thin { stroke-width: 4.5; opacity: .9; }
.street.wide { stroke-width: 10; }
.water { fill: none; stroke: #a9d8fb; stroke-width: 7; }
.hw-edge { fill: none; stroke: #f5cf77; stroke-width: 16; stroke-linejoin: round; }
.hw { fill: none; stroke: #ffe8a3; stroke-width: 10; stroke-linejoin: round; }
.shield use { fill: #fff; stroke: #6c6c6c; stroke-width: 4; }
.shield text { text-anchor: middle; font-size: 36px; font-weight: 500; fill: #444; transform: translateY(12px); }
.lbl { paint-order: stroke; stroke: #fff; stroke-width: 8px; stroke-linejoin: round; fill: #657485; }
.big { font-size: 53px; font-weight: 700; }
.small { font-size: 34px; font-weight: 700; stroke-width: 7px; }
.city { fill: #454b55; font-weight: 500; }
.poi { font-size: 53px; fill: #6b8797; }
.roadname { font-size: 36px; fill: #8a4a1c; }
.route { fill: none; stroke-width: 14; stroke-linejoin: round; stroke-linecap: round; }
.pins { transform: translate(1px, 1px); }
.pins use { fill: #ea4335; stroke: #fff; stroke-width: 3.5; }
.pins text { text-anchor: middle; font-size: 57px; fill: #fff; transform: translateY(19px); stroke: #fff; stroke-width: 2px; }
.glogo { font: 600 77px Lato, sans-serif; paint-order: stroke; stroke: #fff; stroke-width: 5px; }
.maptype { position: absolute; left: 14px; top: 12px; width: 211px; height: 50px; background: #fff; border-radius: 3px; box-shadow: 0 1px 4px -1px rgba(0,0,0,.3); text-align: right; padding-right: 22px; line-height: 49px; font-size: 22.5px; color: #565656; }
.legend { position: absolute; left: 14px; top: 13px; width: 141px; border-collapse: collapse; border: 1px solid #ddd; table-layout: fixed; background: #f1f1f1; font-family: "Liberation Sans", Arial, sans-serif; }
.legend th { height: 39px; width: 77px; background: #00f; color: #fff; padding: 0 0 1px; border: 1px solid #ddd; line-height: 24px; font-size: 17.5px; }
.legend th + th { width: 62px; }
.legend td { height: 43px; padding: 0 7px; border: 1px solid #ddd; }
.legend tbody tr:last-child td { height: 44px; padding-bottom: 1px; }
.legend tr:nth-child(odd) td { background: #ebebdf; }
.legend input { appearance: none; display: block; width: 14px; height: 14px; margin: -2px 0 0; border: 1px solid #a5a5a5; border-radius: 3px; background: linear-gradient(#eee, #dcdcdc); }
.dot { display: block; width: 25px; height: 25px; border-radius: 50%; }
.purple { background: purple; }
.cyan { background: cyan; }
.red { background: red; }
.green { background: green; }
.yellow { background: yellow; }
.ctl { position: absolute; left: 1363px; width: 50px; height: 50px; background: #fff; border-radius: 3px; box-shadow: 0 1px 4px -1px rgba(0,0,0,.4); display: flex; align-items: center; justify-content: center; }
.full { top: 12px; }
.peg { top: 278px; }
.zoom { top: 368px; height: 102px; }
.attrib { position: absolute; right: 0; bottom: 0; height: 18px; display: flex; background: rgba(245,245,245,.75); font-size: 12.5px; line-height: 19px; color: #444; }
.attrib span { padding: 0 7.5px 0 6.5px; white-space: nowrap; }
.attrib span + span { border-left: 1px solid #e2e2e2; }

/* scrollbar */
.scrollbar { width: 21px; background: #f1f1f1; display: flex; flex-direction: column; align-items: center; }
.up { margin-top: 9px; border: 5px solid transparent; border-top: 0; border-bottom: 5px solid #505050; }
.thumb { margin-top: 112px; width: 17px; height: 796px; background: #c1c1c1; }
.down { margin-top: 7px; border: 5px solid transparent; border-bottom: 0; border-top: 5px solid #a3a3a3; }

/* taskbar */
.taskbar { height: 50px; flex: none; display: flex; background: linear-gradient(90deg, #090909 60%, #10140e 80%); color: #fff; font-family: "Open Sans", sans-serif; }
.start { width: 63px; display: flex; align-items: center; padding-left: 20px; }
.app { width: 62px; display: flex; flex-direction: column; align-items: center; justify-content: space-between; padding-top: 10px; }
.app svg { width: 29px; height: 29px; margin-right: 1px; }
.app::after { content: ""; width: 51px; height: 3px; background: #76b9ed; }
.split::after { background: linear-gradient(90deg, #76b9ed 40px, #5a8ab0 40px); }
.active { background: #3b3b3b; }
.active::after { width: 62px; }
.ico { font: bold 12px "Open Sans", sans-serif; fill: #fff; }
.n9 { font-size: 14px; font-weight: 600; }
.tray { margin-left: auto; width: 311px; display: flex; align-items: center; }
.lang { margin-left: 17px; width: 23px; font-size: 14px; letter-spacing: -.4px; }
.clock { margin-left: 14px; width: 78px; display: flex; flex-direction: column; align-items: center; font-size: 14.4px; line-height: 23px; }
.notif { margin-left: 17px; margin-top: 9px; }
.peek { margin-left: 15px; width: 1px; height: 50px; background: #6c6e6a; }
```
